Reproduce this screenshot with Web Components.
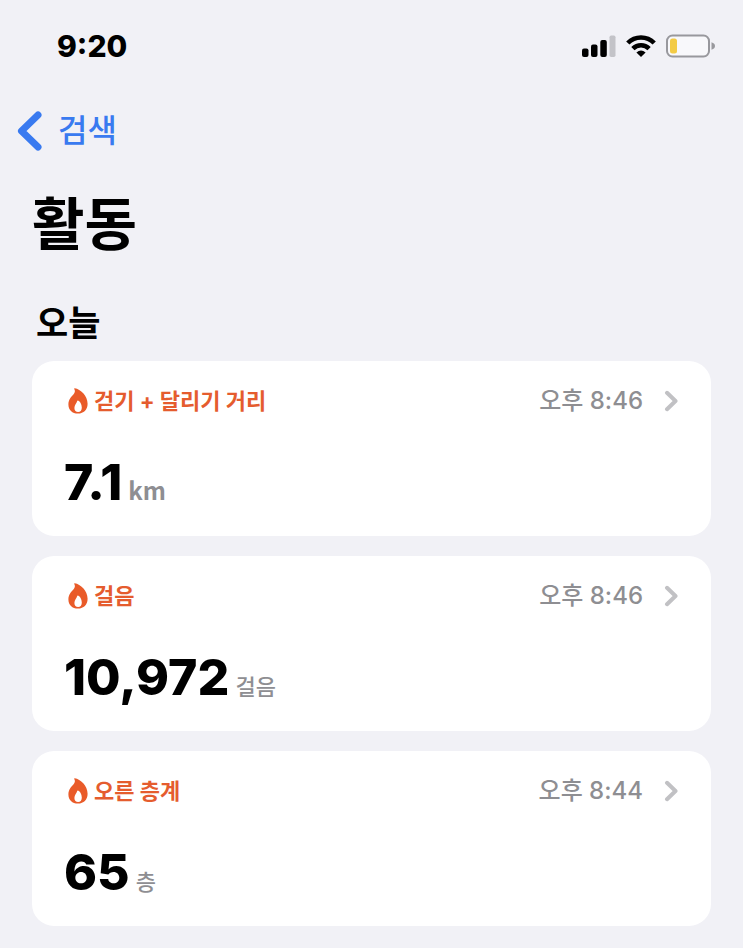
<!DOCTYPE html>
<html lang="ko">
<head>
<meta charset="utf-8">
<meta name="viewport" content="width=device-width, initial-scale=1">
<title>활동</title>
<style>
    body {
        margin: 0;
        background: #f1f1f6;
        color: #000;
        font-family: Inter, "Noto Sans CJK KR", sans-serif;
    }
</style>
</head>
<body>

<health-page>
    <status-bar slot="status" time="9:20"></status-bar>
    <nav-back slot="nav">검색</nav-back>
    <span slot="title">활동</span>
    <span slot="section">오늘</span>
    <metric-card value="7.1" unit="km" time="오후 8:46">걷기 + 달리기 거리</metric-card>
    <metric-card value="10,972" unit="걸음" time="오후 8:46">걸음</metric-card>
    <metric-card value="65" unit="층" time="오후 8:44">오른 층계</metric-card>
</health-page>

<script>
class HealthPage extends HTMLElement {
    constructor() {
        super();
        this.html = /*html*/`
            <style>
            :host {
                display: block;
                padding-bottom: 22px;
            }
            main {
                padding: 0 32px;
            }
            h1, h2 {
                margin: 0;
                font-family: "Noto Sans CJK KR", sans-serif;
                font-weight: 700;
            }
            h1 {
                padding-top: 4px;
                font-size: 57px;
                line-height: 92px;
            }
            h2 {
                padding: 30px 0 15px 4px;
                font-size: 35px;
                line-height: 50px;
            }
            .list {
                display: flex;
                flex-direction: column;
                gap: 20px;
            }
            </style>

            <slot name="status"></slot>
            <slot name="nav"></slot>
            <main>
                <h1><slot name="title"></slot></h1>
                <h2><slot name="section"></slot></h2>
                <div class="list"><slot></slot></div>
            </main>
        `
        this.root = this.attachShadow({ mode: "open" })
        this.root.innerHTML = this.html;
    }
}
customElements.define("health-page", HealthPage);

class StatusBar extends HTMLElement {
    constructor() {
        super();
        this.html = /*html*/`
            <style>
            :host {
                display: flex;
                align-items: center;
                justify-content: space-between;
                height: 92px;
                padding: 0 28px 0 57px;
            }
            .time {
                font-size: 30px;
                line-height: 36px;
                font-weight: 800;
            }
            .icons {
                display: flex;
                align-items: center;
                gap: 10px;
            }
            svg {
                display: block;
            }
            </style>

            <span class="time"></span>
            <span class="icons">
                <svg width="35" height="24" viewBox="0 0 35 24">
                    <rect x="1" y="14.5" width="6.500" height="8.500" rx="2"/>
                    <rect x="10" y="10.500" width="6.500" height="12.500" rx="2"/>
                    <rect x="19.300" y="6" width="6.500" height="17" rx="2"/>
                    <rect x="28.500" y="1.500" width="6" height="21.500" rx="1.700" fill="#c3c3c8"/>
                </svg>
                <svg width="30" height="24" viewBox="0 0 30 24" fill="none" stroke="#000" stroke-width="4.600">
                    <path d="M1.800 9A18.500 18.500 0 0 1 28.200 9"/>
                    <path d="M6.900 14.700A11.400 11.400 0 0 1 23.100 14.700"/>
                    <path d="M10.400 18.500Q15 14.500 19.600 18.500L15 23Z" fill="#000" stroke="none"/>
                </svg>
                <svg width="49" height="24" viewBox="0 0 49 24">
                    <rect x="1" y="1.500" width="42" height="21" rx="5.500" fill="#f8f8fb" stroke="#98989d" stroke-width="2"/>
                    <rect x="4" y="4.500" width="7" height="15" rx="2.500" fill="#f3cb45"/>
                    <path d="M45.500 8.300Q49 9.500 49 12T45.500 15.700Z" fill="#98989d"/>
                </svg>
            </span>
        `
        this.root = this.attachShadow({ mode: "open" })
        this.root.innerHTML = this.html;
        this.root.querySelector('.time').textContent = this.getAttribute("time");
    }
}
customElements.define("status-bar", StatusBar);

class NavBack extends HTMLElement {
    constructor() {
        super();
        this.html = /*html*/`
            <style>
            :host {
                display: block;
                padding: 15px 17px;
            }
            button {
                display: flex;
                align-items: center;
                gap: 15px;
                height: 48px;
                padding: 0;
                border: 0;
                background: none;
                color: #397af0;
                font-family: inherit;
                font-size: 32px;
                line-height: 48px;
                font-weight: 500;
                cursor: pointer;
            }
            svg {
                display: block;
            }
            </style>

            <button type="button">
                <svg width="26" height="40" viewBox="0 0 26 40" fill="none" stroke="currentColor" stroke-width="7" stroke-linecap="round" stroke-linejoin="round">
                    <path d="M21 4L4.500 20L21 36"/>
                </svg>
                <slot></slot>
            </button>
        `
        this.root = this.attachShadow({ mode: "open" })
        this.root.innerHTML = this.html;
    }
}
customElements.define("nav-back", NavBack);

class MetricCard extends HTMLElement {
    constructor() {
        super();
        this.html = /*html*/`
            <style>
            :host {
                display: block;
            }
            a {
                display: flex;
                flex-direction: column;
                gap: 33px;
                padding: 23px 32px;
                border-radius: 22px;
                background: #fff;
                color: inherit;
                text-decoration: none;
            }
            .head {
                display: flex;
                align-items: center;
                height: 34px;
                line-height: 34px;
            }
            .flame {
                margin: 0 6px 0 4px;
            }
            .name {
                flex: 1;
                color: #e55c2e;
                font-size: 22px;
                font-weight: 700;
            }
            .time {
                margin-right: 21px;
                color: #8e8e92;
                font-size: 24px;
                font-weight: 500;
            }
            .body {
                display: flex;
                align-items: baseline;
                gap: 6px;
            }
            .value {
                font-size: 50px;
                line-height: 62px;
                font-weight: 800;
            }
            .unit {
                color: #8e8e92;
                font-family: "Noto Sans CJK KR", sans-serif;
                font-size: 22px;
                line-height: 34px;
                font-weight: 500;
            }
            .unit:lang(en) {
                font-size: 24px;
                font-weight: 700;
            }
            </style>

            <a href="#">
                <span class="head">
                    <svg class="flame" width="20" height="26" viewBox="0 0 20 26">
                        <path fill="#e95b29" fill-rule="evenodd" d="M6.800 .3C12.500 1.300 19.600 7.600 19.600 15.800C19.600 21.800 15.700 25.600 10 25.600C4.200 25.600 .4 21.900 .4 16.500C.4 11.700 3.200 8.700 5.600 6.300C6.900 4.800 7.400 2.900 6.300 1C6 .5 6.300 .2 6.800 .3ZM10 12.400C9.600 12.300 9.300 12.600 9.200 13.100C8.600 15.500 6.400 17 6.400 20C6.400 22.600 7.900 24 10.100 24C12.300 24 13.800 22.500 13.800 19.700C13.800 16.300 12.200 13.200 10 12.400Z"/>
                    </svg>
                    <span class="name"><slot></slot></span>
                    <span class="time"></span>
                    <svg width="15" height="22" viewBox="0 0 15 22" fill="none" stroke="#c1c1c4" stroke-width="4" stroke-linecap="round" stroke-linejoin="round">
                        <path d="M3 2.800L11.500 11L3 19.200"/>
                    </svg>
                </span>
                <span class="body">
                    <span class="value"></span>
                    <span class="unit"></span>
                </span>
            </a>
        `
        this.root = this.attachShadow({ mode: "open" })
        this.root.innerHTML = this.html;
        const unit = this.root.querySelector('.unit');
        unit.textContent = this.getAttribute("unit");
        // latin units are set a little heavier than hangul ones
        unit.lang = /^[a-z]+$/.test(unit.textContent) ? "en" : "ko";
        this.root.querySelector('.value').textContent = this.getAttribute("value");
        this.root.querySelector('.time').textContent = this.getAttribute("time");
    }
}
customElements.define("metric-card", MetricCard);
</script>
</body>
</html>
